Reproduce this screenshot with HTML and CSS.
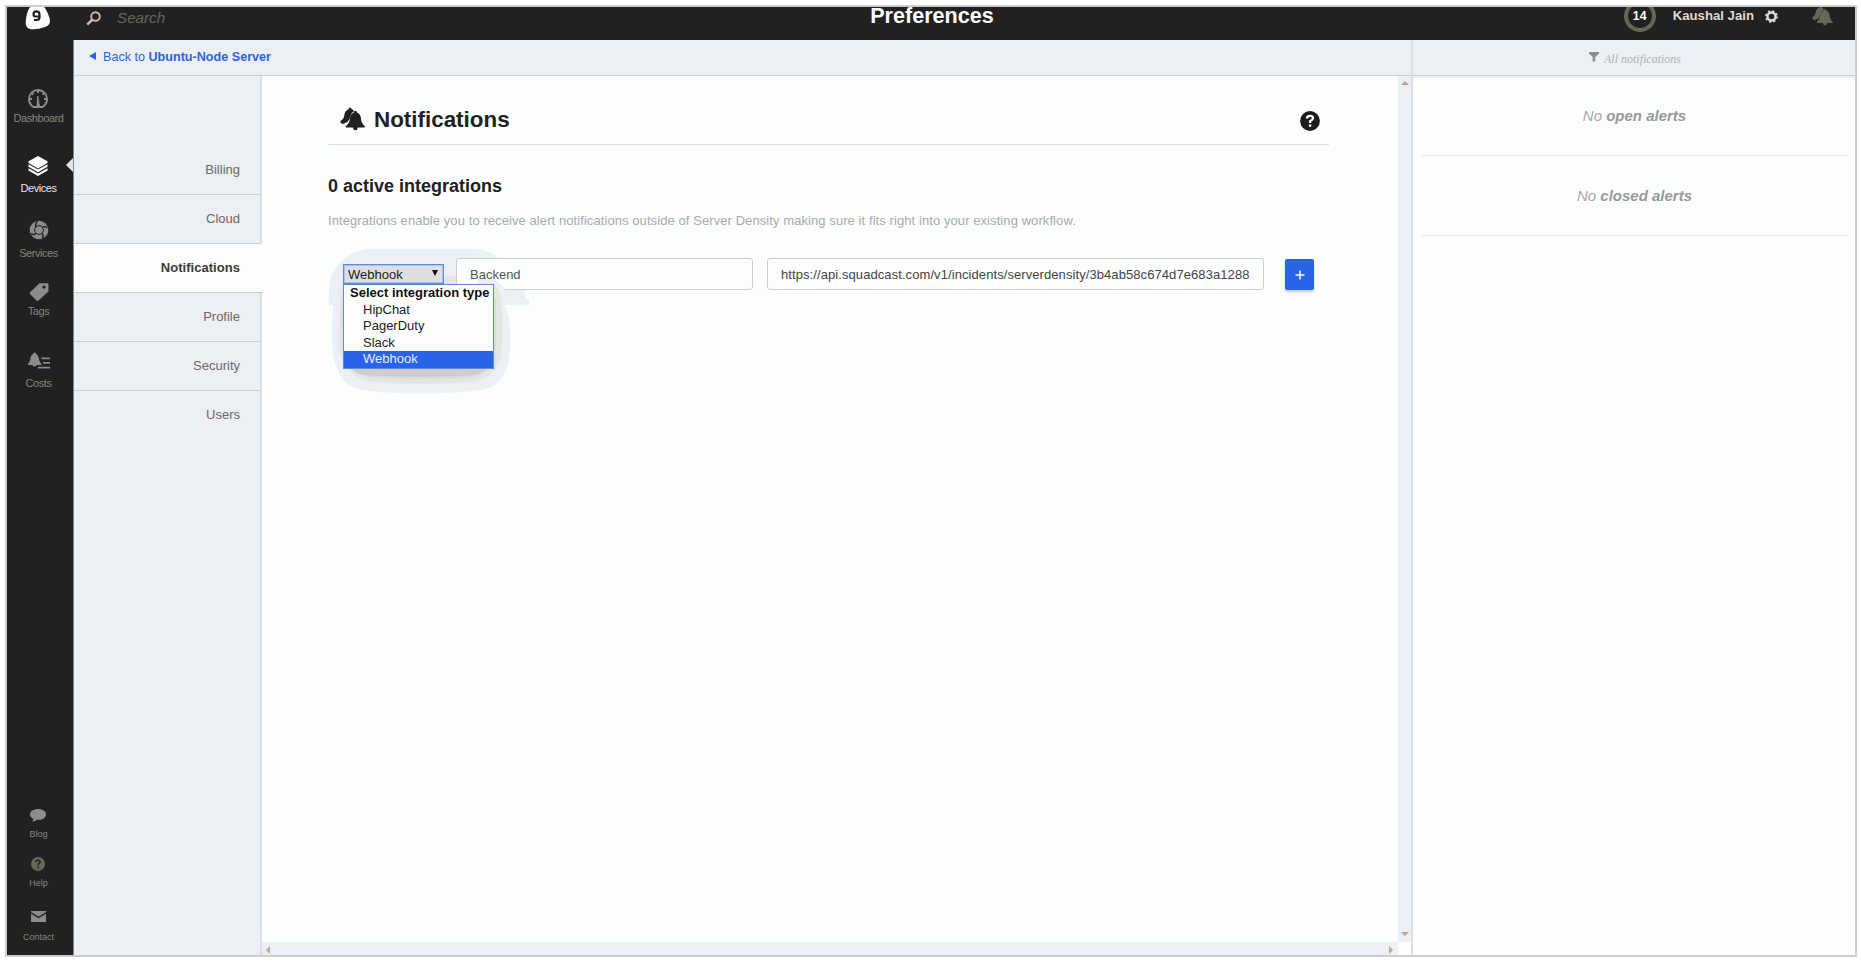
FILE: index.html
```html
<!DOCTYPE html>
<html lang="en">
<head>
<meta charset="utf-8">
<title>Preferences</title>
<link rel="stylesheet" href="styles.css">
</head>
<body>
<svg width="0" height="0" class="defs">
  <symbol id="bells" viewBox="0 0 25 24">
    <path d="M7.500 15 Q10 12.500 10.500 9 Q11.300 5.500 14 4.300 Q13 2.200 11.600 2 Q11.300 .3 9.700 .5 Q8.500 .8 8.700 2.200 Q4.600 3.600 4.300 8.200 Q4 11.700 .6 13.800 Q0 15.800 1.500 16.600 L3.200 17 Q4.600 15.800 7.500 15Z"/>
    <path class="gap" d="M15.400 3.800 Q17 3.800 17 5.400 Q20.600 6.800 21 11.500 Q21.300 16.500 25 19.300 Q25 20.500 24 20.500 H17.800 Q17.500 23.300 15.400 23.300 Q13.300 23.300 13 20.500 H6.300 Q5.500 20.500 5.700 19.300 Q9.500 16.500 9.900 11.500 Q10.300 6.800 13.800 5.400 Q13.800 3.800 15.400 3.800Z"/>
  </symbol>
</svg>
<div class="frame">
  <header class="topbar">
    <div class="logo"><svg width="26" height="26" viewBox="0 0 26 26"><path fill="#fcfefd" d="M5 0H19Q22 3 24.500 11Q26.500 18 20 20Q12 23 5 22Q1 21 .7 16Q1 6 5 0Z"/><path fill="none" stroke="#212121" stroke-width="2.200" d="M13.600 9.500H10.500Q8.500 9.500 8.500 7Q8.500 4.300 11.200 4.300Q14.500 4.300 14.500 7.500V10.500Q14.500 13 11.500 13H9"/></svg></div>
    <div class="search"><svg width="15" height="15" viewBox="0 0 15 15" fill="none" stroke="#cdb8aa"><circle cx="9.500" cy="5.500" r="4.300" stroke-width="1.900"/><path d="M6.500 8.500L1.200 13.600" stroke-width="2.600"/></svg><span>Search</span></div>
    <h1>Preferences</h1>
    <div class="account">
      <span class="badge">14</span>
      <b>Kaushal Jain</b>
      <svg class="gear" width="13" height="13" viewBox="0 0 13 13" fill="none" stroke="#dcd9d6"><circle cx="6.500" cy="6.500" r="4" stroke-width="2.400"/><circle cx="6.500" cy="6.500" r="5.600" stroke-width="1.600" stroke-dasharray="2.200 2.200"/></svg>
      <svg class="top-bells" width="21" height="20"><use href="#bells"/></svg>
    </div>
  </header>
  <div class="body">
    <nav class="sidebar">
      <a class="item s1"><svg width="20" height="20" viewBox="0 0 20 20" fill="none" stroke="#8d8b8b" stroke-width="1.900"><path d="M5.500 18Q1 15 1 10A9 9 0 0 1 19 10Q19 15 14.500 18Z"/><path d="M10 1V4M1 10H4M16 10H19M3.800 3.800L5.500 5.500M16.200 3.800L14.500 5.500"/><path d="M9.700 7L9 17H11.500Z" fill="#8d8b8b" stroke-width=".8"/></svg><span>Dashboard</span></a>
      <a class="item s2 on"><svg width="20" height="20" viewBox="0 0 20 20" fill="#fcfefd"><path d="M10 0L19.500 5.200V7L10 12.400L.5 7V5.200Z"/><path d="M.5 8.300L10 13.600L19.500 8.300V10.800L10 16.200L.5 10.800Z"/><path d="M.5 12.200L10 17.400L19.500 12.200V14.600L10 20L.5 14.600Z"/></svg><span>Devices</span><i class="pointer"></i></a>
      <a class="item s3"><svg width="20" height="20" viewBox="0 0 20 20"><circle cx="10" cy="10" r="9.300" fill="#8d8b8b"/><circle cx="10" cy="10" r="4.400" fill="none" stroke="#212121" stroke-width="1"/><path d="M6.500 7.500Q6 4 8.500 1M13.500 7Q16.500 6 18.500 8M13 13.500Q15 15.500 13.500 18.500M7 13.500Q4.500 15.500 2 13.500" fill="none" stroke="#212121" stroke-width="1.400"/></svg><span>Services</span></a>
      <a class="item s4"><svg width="20" height="20" viewBox="0 0 20 20" fill="#8d8b8b"><path fill-rule="evenodd" d="M10.500 1.200H18.500Q19.500 1.200 19.500 2.200V9.500L9.500 18.500Q8.500 19.300 7.500 18.500L1 12Q.5 11 1.300 10ZM15 3.400A1.700 1.700 0 1 0 15 6.800A1.700 1.700 0 1 0 15 3.400Z"/></svg><span>Tags</span></a>
      <a class="item s5"><svg width="22" height="18" viewBox="0 0 22 18" fill="#8d8b8b"><path d="M6.500 .5Q8 .5 8 2Q10.500 3 11 7Q11.500 10.500 13.500 12V13H8.800Q8 14.500 6.500 14.500Q5 14.500 4.500 13H0V12Q2 10.500 2.300 7Q2.800 3 5 2Q5 .5 6.500 .5ZM13 5.500H22V7.300H14ZM14.500 10H22V11.800H15.500ZM10 14.800H22V16.600H10Z"/></svg><span>Costs</span></a>
      <a class="item small s6"><svg width="16" height="13" viewBox="0 0 16 13" fill="#8d8b8b"><path d="M8 0C12.500 0 16 2.300 16 5.500C16 9.500 11 11.500 7 10.700Q5 12.500 2 12.600Q3.500 11 3.400 9.700Q0 8.300 0 5.500C0 2.300 3.500 0 8 0Z"/></svg><span>Blog</span></a>
      <a class="item small s7"><svg width="14" height="14" viewBox="0 0 14 14"><circle cx="7" cy="7" r="7" fill="#666857"/><path d="M4.800 5.200Q5 3.300 7 3.300Q9.200 3.300 9.200 5.100Q9.200 6.300 7.200 7V8.400M7.200 9.600V11.200" fill="none" stroke="#212121" stroke-width="1.500"/></svg><span>Help</span></a>
      <a class="item small s8"><svg width="15" height="11" viewBox="0 0 15 11"><path fill="#8d8b8b" d="M0 0H15V11H0Z"/><path d="M0 1.800L7.500 6.500L15 1.800" fill="none" stroke="#212121" stroke-width="1.400"/></svg><span>Contact</span></a>
    </nav>
    <div class="main">
      <div class="crumb"><i class="back"></i><span>Back to <b>Ubuntu-Node Server</b></span></div>
      <div class="cols">
        <nav class="menu">
          <a>Billing</a><a>Cloud</a><a class="on">Notifications</a><a>Profile</a><a>Security</a><a>Users</a>
        </nav>
        <div class="scroller">
          <main class="content">
            <div class="title"><svg class="bells" width="25" height="24"><use href="#bells"/></svg><h2>Notifications</h2>
              <svg class="help" width="20" height="20" viewBox="0 0 20 20"><circle cx="10" cy="10" r="9.900" fill="#1c1c1c"/><path d="M6.900 7.500Q7.100 4.800 10 4.800Q13 4.800 13 7.300Q13 8.800 10.100 10.300V12M10.100 13.400V15.800" fill="none" stroke="#fcfefd" stroke-width="2.300"/></svg></div>
            <h3>0 active integrations</h3>
            <p>Integrations enable you to receive alert notifications outside of Server Density making sure it fits right into your existing workflow.</p>
            <div class="form">
              <svg class="halo" width="206" height="146" viewBox="0 0 206 146"><path fill="#eceff3" d="M38 0H148Q164 2 170 9H197V50H201V56H176Q183 65 182 95Q183 125 164 138Q150 144 92 144Q38 144 24 138Q3 127 4 82L5 56H1Q0 40 3 26Q16 4 38 0Z"/><path fill="#e6e5e6" d="M116 27H130V36H116Z"/></svg>
              <div class="select"><span>Webhook</span><i class="caret"></i></div>
              <div class="field name">Backend</div>
              <div class="field url">https://api.squadcast.com/v1/incidents/serverdensity/3b4ab58c674d7e683a1288</div>
              <div class="add"><svg width="10" height="10"><path d="M5 .5V9.500M.5 5H9.500" stroke="#fff" stroke-width="1.500"/></svg></div>
              <svg class="halo" width="206" height="146" viewBox="0 0 206 146"><path fill="#eceff3" d="M150 30H164Q174 34 177 41H197V50H201V56H150Z"/><path fill="#e6e5e6" d="M12 50Q12 40 15 35H166Q174 42 174 60V100Q172 126 148 132Q100 138 40 132Q16 126 11 100Z"/><path fill="#dcdcde" d="M14 50H168V100Q167 124 145 128Q92 133 40 128Q17 124 15 100Z"/><path fill="#cecece" d="M18 110H164Q162 122 146 126Q92 130 36 126Q20 122 18 110Z"/></svg>
              <div class="dropdown"><b>Select integration type</b><span>HipChat</span><span>PagerDuty</span><span>Slack</span><span class="sel">Webhook</span></div>
            </div>
          </main>
          <div class="vbar"><i class="up"></i><i class="down"></i></div>
          <div class="hbar"><i class="left"></i><i class="right"></i></div>
        </div>
      </div>
    </div>
    <aside class="alerts">
      <div class="filter"><svg width="10" height="10" viewBox="0 0 10 10"><path fill="#8d8d90" d="M0 0H10V1.500L6.300 5V9L3.700 10V5L0 1.500Z"/></svg><span>All notifications</span></div>
      <div class="list"><div>No&nbsp;<b>open alerts</b></div><div>No&nbsp;<b>closed alerts</b></div></div>
    </aside>
  </div>
</div>
</body>
</html>
```
FILE: styles.css
```css
* { box-sizing: border-box; }
body { margin: 0; padding: 5px; width: 1861px; height: 962px; overflow: hidden; background: #fff; font: 13px/16px "Liberation Sans", Arial, sans-serif; color: #212121; }
h1, h2, h3, p { margin: 0; }
svg { display: block; flex: none; }
.defs { position: absolute; }
.frame { width: 1852px; height: 952px; border: 2px solid #cdcdcd; background: #fcfefd; display: flex; flex-direction: column; overflow: hidden; }

.topbar { height: 33px; flex: none; background: #212121; display: grid; grid-template-columns: 66px 1fr auto 1fr; align-items: start; }
.logo { padding-left: 18px; height: 26px; }
.search { display: flex; align-items: center; gap: 16px; padding: 1px 0 0 13px; height: 21px; color: #666857; font-size: 15.2px; font-style: italic; }
.topbar h1 { color: #fcfefd; font-size: 21.6px; line-height: 18px; margin: 0 64px 0 0; }
.account { display: flex; align-items: center; justify-content: flex-end; color: #dcd9d6; font-size: 13.2px; height: 34px; margin-top: -8px; padding-right: 22px; }
.badge { width: 32px; height: 32px; border: 4px solid #666857; border-radius: 50%; color: #fff; font-weight: bold; font-size: 12.200px; line-height: 24px; text-align: center; margin-right: 17px; margin-top: -1px; }
.gear { margin-left: 11px; }
.top-bells { margin-left: 34px; fill: #666857; }
.bells { fill: #212121; margin-top: 3px; }

.body { flex: 1; display: flex; min-height: 0; }
.sidebar { width: 67px; flex: none; background: #212121; border-right: 1px solid #888; display: flex; flex-direction: column; align-items: center; padding-right: 3px; }
.item { display: flex; flex-direction: column; align-items: center; position: relative; color: #85857a; font-size: 11px; line-height: 14px; letter-spacing: -.45px; }
.item.on { color: #e6e5e6; }
.s1 { margin-top: 49px; gap: 2px; }
.s2 { margin-top: 31px; gap: 5px; }
.s3 { margin-top: 25px; gap: 6px; }
.s4 { margin-top: 22px; gap: 2px; }
.s5 { margin-top: 34px; gap: 6px; }
.small { font-size: 9px; line-height: 10px; letter-spacing: 0; }
.s6 { margin-top: 419px; gap: 7px; }
.s7 { margin-top: 18px; gap: 7px; }
.s8 { margin-top: 23px; gap: 10px; }
.pointer { position: absolute; right: -17px; top: 2px; border: 7px solid transparent; border-left: 0; border-right: 7px solid #e6e5e6; }

.main { flex: 1; display: flex; flex-direction: column; min-width: 0; }
.crumb { height: 36px; flex: none; background: #eceff3; border-bottom: 1px solid #cdcdcd; display: flex; align-items: center; gap: 7px; padding: 0 0 2px 15px; color: #2a66dc; font-size: 12.6px; }
.back { border: 4px solid transparent; border-left: 0; border-right: 7px solid #2764ea; margin-top: -2px; }
.cols { flex: 1; display: flex; min-height: 0; }
.menu { width: 188px; flex: none; background: #eceff3; border-right: 2px solid #dcdfe2; padding-top: 70px; display: flex; flex-direction: column; color: #6c6868; }
.menu a { height: 49px; border-bottom: 1px solid #cdcdcd; text-align: right; line-height: 47px; padding-right: 20px; }
.menu a:last-child { border-bottom: 0; }
.menu .on { background: #fcfefd; margin-right: -2px; padding-right: 22px; font-weight: bold; color: #3c3a34; letter-spacing: .04px; }

.scroller { flex: 1; display: grid; grid-template: 1fr 13px / 1fr 13px; min-width: 0; }
.content { padding: 28px 69px 0 66px; min-width: 0; }
.title { height: 41px; border-bottom: 1px solid #dcdfe2; display: flex; align-items: flex-start; padding-left: 12px; }
.title h2 { font-size: 22.4px; line-height: 26px; margin: 3px 0 0 9px; }
.title .help { margin: 7px 9px 0 auto; }
h3 { font-size: 18px; line-height: 22px; margin-top: 30px; }
.content p { color: #a9aaae; margin-top: 16px; white-space: nowrap; letter-spacing: .08px; }
.form { position: relative; display: flex; margin-top: 29px; height: 32px; padding-left: 15px; }
.halo { position: absolute; left: 0; top: -9px; }
.select { position: relative; width: 101px; height: 20px; margin-top: 6px; border: 1px solid #5b8ad8; box-shadow: inset 0 0 0 1px #a8c4ea; background: #dedee0; display: flex; align-items: center; justify-content: space-between; padding: 1px 5px 0 4px; color: #212121; }
.caret { border: 3.500px solid transparent; border-bottom: 0; border-top: 6px solid #111; margin-top: -3px; }
.field { position: relative; height: 32px; background: #fcfefd; border: 1px solid #cdcdcd; border-radius: 3px; line-height: 32px; padding-left: 13px; color: #555; white-space: nowrap; }
.name { width: 297px; margin-left: 12px; }
.url { width: 497px; margin-left: 14px; color: #444; letter-spacing: .08px; }
.add { width: 29px; height: 31px; margin: 1px 0 0 21px; background: #2764ea; border-radius: 2px; box-shadow: 0 2px 3px #c5c8d0; display: flex; align-items: center; justify-content: center; }
.dropdown { position: absolute; left: 15px; top: 26px; width: 151px; height: 85px; border: 1px solid #5b8ad8; background: #fcfefd; color: #212121; display: flex; flex-direction: column; }
.dropdown b { padding-left: 6px; line-height: 15px; height: 17px; white-space: nowrap; color: #111; }
.dropdown span { padding-left: 19px; height: 16.500px; line-height: 16px; }
.dropdown .sel { background: #2764ea; color: #e8eefa; height: 17px; }

.vbar { background: #eceff3; display: flex; flex-direction: column; justify-content: space-between; align-items: center; padding: 5px 0 6px; }
.hbar { background: #eceff3; display: flex; justify-content: space-between; align-items: center; padding: 2px 5px 0 4px; }
.up, .down, .left, .right { border: 4px solid transparent; }
.up { border-top: 0; border-bottom-color: #c0a596; }
.down { border-bottom: 0; border-top-color: #c0a596; }
.left { border-left: 0; border-right-color: #c0a596; }
.right { border-right: 0; border-left-color: #c0a596; }

.alerts { width: 444px; flex: none; border-left: 2px solid #dcdfe2; }
.filter { height: 38px; background: #eceff3 linear-gradient(#cdcdcd, #cdcdcd) 0 35px / 100% 1px no-repeat; display: flex; justify-content: center; gap: 5px; padding: 12px 0 0 2px; color: #b4b2b2; font: italic 12px/14px "Liberation Serif", serif; }
.list { padding: 0 8px 0 9px; }
.list div { height: 80px; border-bottom: 1px solid #e4e5e6; line-height: 80px; text-align: center; font-size: 15px; font-style: italic; color: #a4a6ac; }
.list div:first-child { height: 78px; line-height: 75px; }
.list b { color: #96989f; }
```
